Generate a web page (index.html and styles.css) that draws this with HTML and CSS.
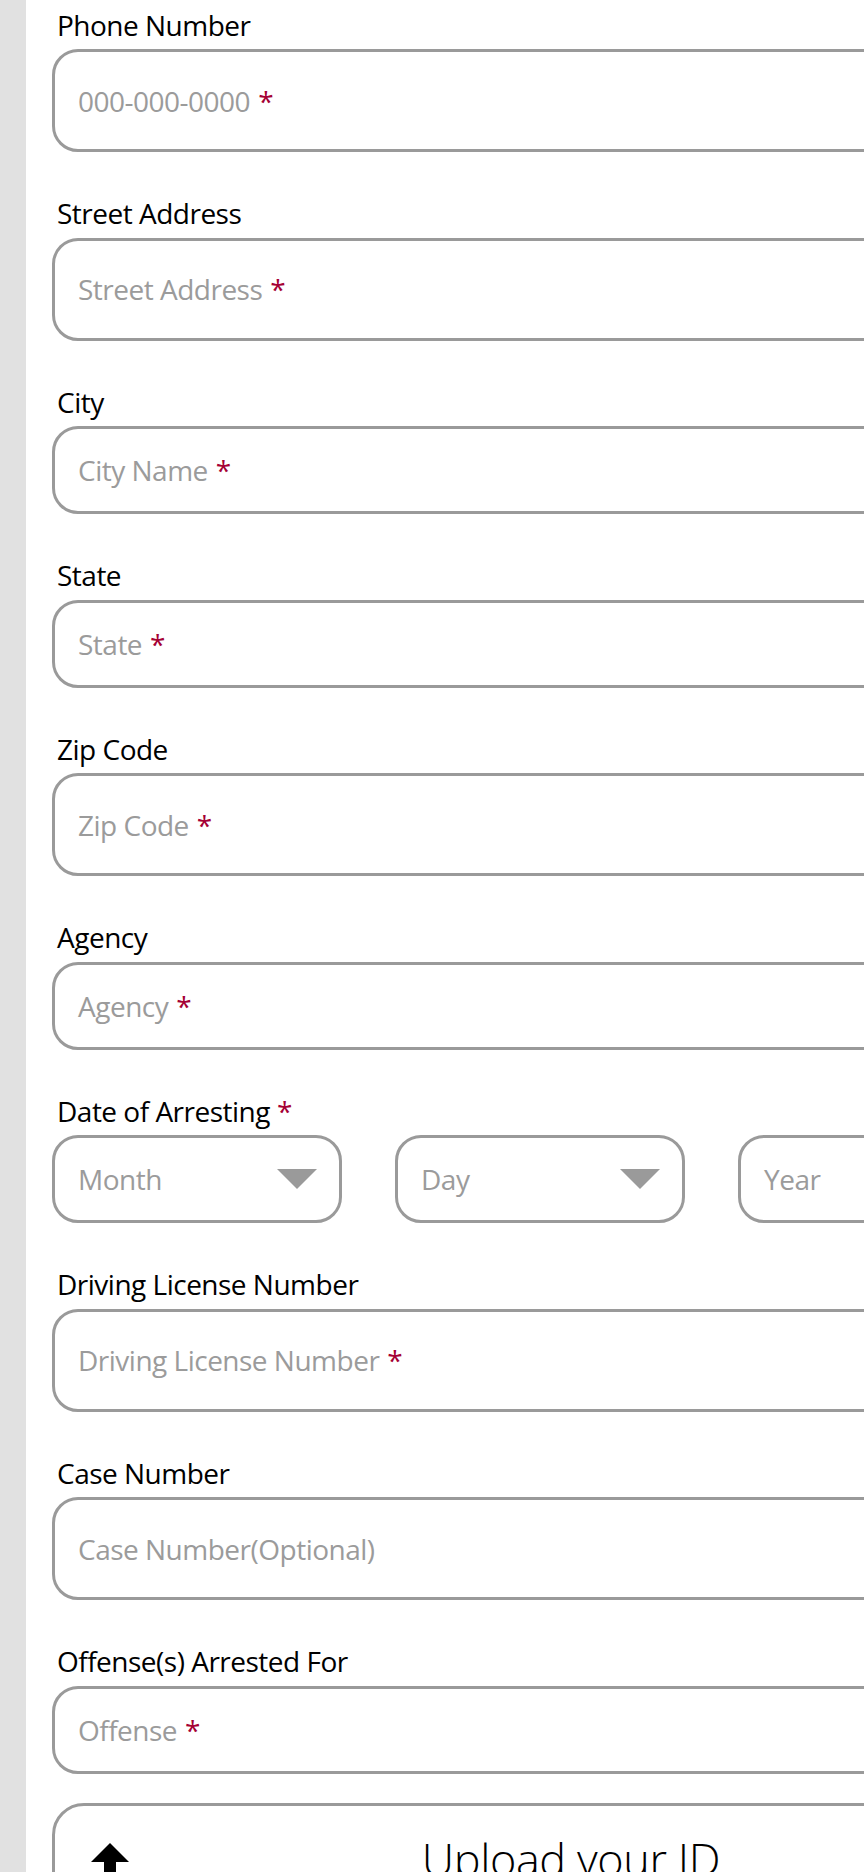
FILE: index.html
```html
<!DOCTYPE html>
<html lang="en">
<head>
<meta charset="utf-8">
<title>Arrest Information Form</title>
<link rel="stylesheet" href="styles.css">
</head>
<body>
<div class="page">
  <aside class="rail"></aside>
  <main class="form">
    <div class="fields">
      <div class="field">
        <div class="label">Phone Number</div>
        <div class="box box--tall"><span class="ph">000-000-0000</span><span class="req">*</span></div>
      </div>
      <div class="field">
        <div class="label">Street Address</div>
        <div class="box box--tall"><span class="ph">Street Address</span><span class="req">*</span></div>
      </div>
      <div class="field">
        <div class="label">City</div>
        <div class="box box--short"><span class="ph">City Name</span><span class="req">*</span></div>
      </div>
      <div class="field">
        <div class="label">State</div>
        <div class="box box--short"><span class="ph">State</span><span class="req">*</span></div>
      </div>
      <div class="field">
        <div class="label">Zip Code</div>
        <div class="box box--tall"><span class="ph">Zip Code</span><span class="req">*</span></div>
      </div>
      <div class="field">
        <div class="label">Agency</div>
        <div class="box box--short"><span class="ph">Agency</span><span class="req">*</span></div>
      </div>
      <div class="field">
        <div class="label">Date of Arresting<span class="req">*</span></div>
        <div class="date-row">
          <div class="box box--short select"><span class="ph">Month</span><span class="caret"></span></div>
          <div class="box box--short select"><span class="ph">Day</span><span class="caret"></span></div>
          <div class="box box--short select"><span class="ph">Year</span><span class="caret"></span></div>
        </div>
      </div>
      <div class="field">
        <div class="label">Driving License Number</div>
        <div class="box box--tall"><span class="ph">Driving License Number</span><span class="req">*</span></div>
      </div>
      <div class="field">
        <div class="label">Case Number</div>
        <div class="box box--tall"><span class="ph">Case Number(Optional)</span></div>
      </div>
      <div class="field">
        <div class="label">Offense(s) Arrested For</div>
        <div class="box box--short"><span class="ph">Offense</span><span class="req">*</span></div>
      </div>
    </div>
    <div class="upload">
      <svg class="upload-icon" viewBox="0 0 38 60" width="38" height="60" aria-hidden="true">
        <polygon points="19,0 38,19 25,19 25,60 13,60 13,19 0,19" fill="#000"/>
      </svg>
      <div class="upload-text">Upload your ID</div>
    </div>
  </main>
</div>
</body>
</html>
```
FILE: styles.css
```css
html, body {
  margin: 0;
  padding: 0;
}
body {
  font-family: "Open Sans", "Noto Sans", sans-serif;
  background: #ffffff;
  color: #000000;
  overflow: hidden;
}
.page {
  display: flex;
  width: 1100px;
  min-height: 1872px;
}
.rail {
  flex: none;
  width: 26px;
  background: #e1e1e1;
}
.form {
  flex: none;
  width: 976px;
  padding: 7.5px 0 0 26px;
}
.fields {
  display: flex;
  flex-direction: column;
  gap: 44px;
}
.label {
  font-size: 28px;
  line-height: 34px;
  letter-spacing: -0.5px;
  padding-left: 5px;
  margin-bottom: 7.5px;
  color: #000;
}
.label .req {
  margin-left: 7px;
}
.box {
  box-sizing: border-box;
  display: flex;
  align-items: center;
  border: 3px solid #9a9a9a;
  border-radius: 26px;
  padding-left: 23px;
  font-size: 28px;
  letter-spacing: -0.5px;
  background: #fff;
}
.box--tall {
  height: 103px;
}
.box--short {
  height: 88px;
}
.ph {
  color: #9b9b9b;
}
.req {
  color: #a50034;
  margin-left: 8px;
}
.date-row {
  display: grid;
  grid-template-columns: repeat(3, 290px);
  column-gap: 53px;
}
.select {
  justify-content: space-between;
  padding-right: 22px;
}
.caret {
  width: 0;
  height: 0;
  border-left: 20px solid transparent;
  border-right: 20px solid transparent;
  border-top: 20px solid #9a9a9a;
}
.upload {
  box-sizing: border-box;
  margin-top: 29px;
  height: 220px;
  border: 3px solid #9a9a9a;
  border-radius: 32px;
  display: flex;
  align-items: flex-start;
  padding: 37px 12px 0 36px;
}
.upload-icon {
  flex: none;
  display: block;
}
.upload-text {
  flex: 1;
  text-align: center;
  font-size: 45px;
  font-weight: 300;
  line-height: 56px;
  margin-top: -12px;
  letter-spacing: -0.4px;
}
```
